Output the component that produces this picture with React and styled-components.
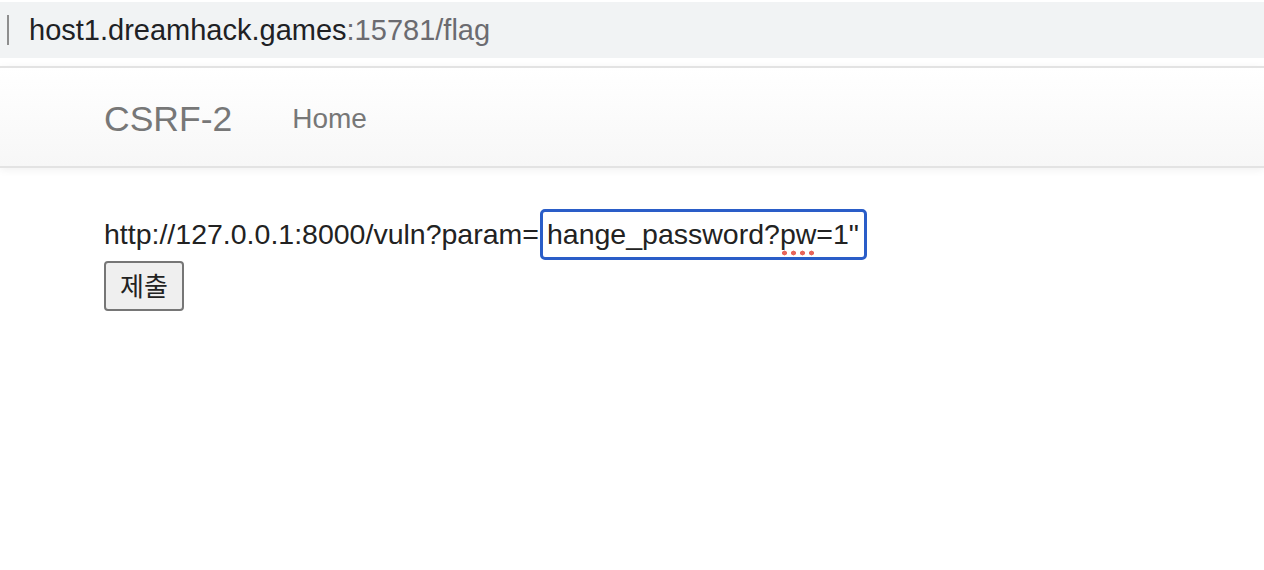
import React from "react";
import styled, {createGlobalStyle} from "styled-components";

const GlobalStyle = createGlobalStyle`
  body {
    margin: 0;
    background: #fff;
    font-family: "Liberation Sans", Arial, sans-serif;
  }
`;

const BrowserBar = styled.div`
  padding-top: 2px;
  height: 64px;
  box-sizing: border-box;
  background: #fff;
`;

const UrlField = styled.div`
  display: flex;
  align-items: center;
  height: 56px;
  background: #f1f3f4;
  padding-left: 7px;
`;

const Caret = styled.span`
  width: 2px;
  height: 30px;
  background: #8e8e8e;
  margin-right: 20px;
`;

const UrlText = styled.span`
  font-size: 29px;
  color: ${p => (p.$muted ? "#6b6b70" : "#202124")};
`;

const Navbar = styled.nav`
  display: flex;
  align-items: center;
  height: 94px;
  margin-top: 2px;
  padding: 4px 0 0 89px;
  background: linear-gradient(to bottom, #ffffff 0%, #f7f7f7 100%);
  border-top: 2px solid #e3e3e3;
  border-bottom: 2px solid #e3e3e3;
  box-shadow: 0 2px 8px rgba(0, 0, 0, 0.06);
`;

const Brand = styled.a`
  padding: 0 15px;
  font-size: 35.5px;
  color: #777;
  text-decoration: none;
`;

const NavLink = styled.a`
  padding: 0 30px;
  margin-left: 15px;
  font-size: 28px;
  color: #777;
  text-decoration: none;
`;

const Content = styled.form`
  padding: 40px 0 0 104px;
  color: #222;
  font-size: 28.5px;
`;

const Row = styled.div`
  display: flex;
  align-items: center;
  height: 52px;
`;

const FakeInput = styled.div`
  box-sizing: border-box;
  width: 327px;
  height: 51px;
  margin-left: 1px;
  padding: 0 4px;
  border: 3px solid #2a5dc8;
  border-radius: 5px;
  display: flex;
  align-items: center;
  overflow: hidden;
  white-space: nowrap;
  color: #222;
`;

const Misspelled = styled.span`
  background-image: radial-gradient(circle, #e8655a 2.2px, transparent 2.7px);
  background-size: 9px 6px;
  background-repeat: repeat-x;
  background-position: 0 100%;
  padding-bottom: 5px;
  margin-bottom: -5px;
`;

const SubmitButton = styled.button`
  display: block;
  margin-top: 1px;
  width: 80px;
  height: 50px;
  box-sizing: border-box;
  background: #efefef;
  border: 2px solid #767676;
  border-radius: 4px;
  font-family: "Noto Sans CJK KR", sans-serif;
  font-size: 26px;
  line-height: 1;
  color: #222;
  padding: 0 0 2px;
`;

export default function App() {
  return (
    <>
      <GlobalStyle/>
      <BrowserBar>
        <UrlField>
          <Caret/>
          <UrlText>host1.dreamhack.games</UrlText>
          <UrlText $muted>:15781/flag</UrlText>
        </UrlField>
      </BrowserBar>
      <Navbar>
        <Brand href="#">CSRF-2</Brand>
        <NavLink href="#">Home</NavLink>
      </Navbar>
      <Content onSubmit={e => e.preventDefault()}>
        <Row>
          <span>http://127.0.0.1:8000/vuln?param=</span>
          <FakeInput>hange_password?<Misspelled>pw</Misspelled>=1"</FakeInput>
        </Row>
        <SubmitButton type="submit">제출</SubmitButton>
      </Content>
    </>
  );
}
